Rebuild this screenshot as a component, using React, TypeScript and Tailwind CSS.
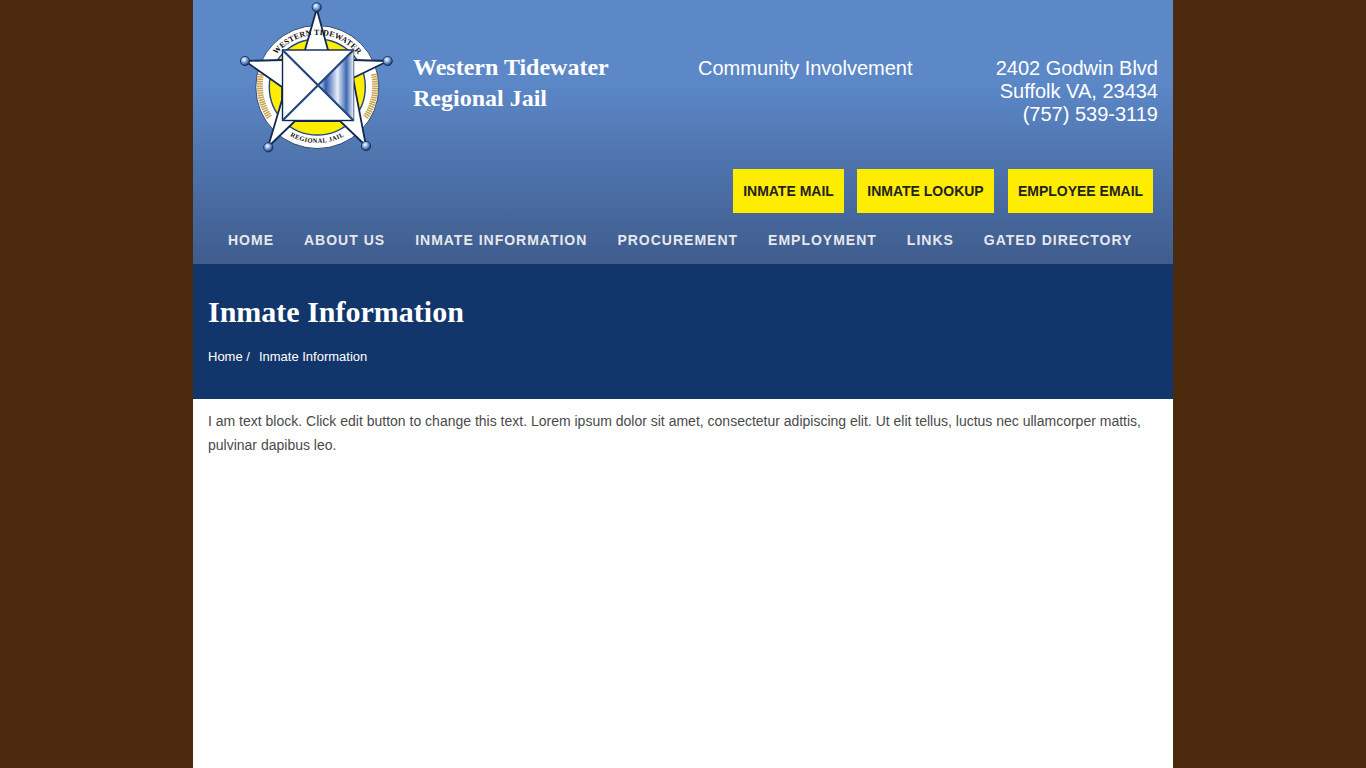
const navItems = ["HOME", "ABOUT US", "INMATE INFORMATION", "PROCUREMENT", "EMPLOYMENT", "LINKS", "GATED DIRECTORY"];

const Logo = () => (
  <svg viewBox="0 0 175 160" className="w-[175px] h-[160px] shrink-0">
    <defs>
      <linearGradient id="foil" gradientUnits="userSpaceOnUse" x1="88" x2="123.5" y1="0" y2="0">
        <stop offset="0" stopColor="#ffffff" />
        <stop offset="0.22" stopColor="#2f5cae" />
        <stop offset="0.55" stopColor="#e8eef8" />
        <stop offset="0.8" stopColor="#3f6ab4" />
        <stop offset="1" stopColor="#eef2f8" />
      </linearGradient>
      <radialGradient id="ball" cx="0.4" cy="0.35" r="0.7">
        <stop offset="0" stopColor="#ffffff" />
        <stop offset="0.45" stopColor="#7ba3dc" />
        <stop offset="1" stopColor="#0f2450" />
      </radialGradient>
      <path id="topArc" d="M 38.4 69.2 A 52 52 0 0 1 136.2 69.2" fill="none" />
      <path id="botArc" d="M 51.3 129.9 A 56 56 0 0 0 123.3 129.9" fill="none" />
    </defs>
    <circle cx="87.3" cy="87" r="61.5" fill="#ffffff" stroke="#1b2a4a" strokeWidth="0.8" />
    <circle cx="87.3" cy="87" r="48" fill="#ffed00" stroke="#24467f" strokeWidth="1.4" />
    <path d="M 31 74 A 57 57 0 0 0 40 118" fill="none" stroke="#c9a24f" strokeWidth="6" strokeDasharray="1.5 0.8" />
    <path d="M 144 74 A 57 57 0 0 1 135 118" fill="none" stroke="#c9a24f" strokeWidth="6" strokeDasharray="1.5 0.8" />
    <polygon
      points="86.7,9 98,50 123,60 158,61 123,78 136,146 110,121 65,121 38,147 52,100 52,87 15,61 52,60 75,50"
      fill="#ffffff"
      stroke="#122a55"
      strokeWidth="1.8"
      strokeLinejoin="round"
    />
    <text fontFamily="Liberation Serif, serif" fontWeight="700" fontSize="8" fill="#111111" letterSpacing="0.2">
      <textPath href="#topArc" startOffset="50%" textAnchor="middle">WESTERN TIDEWATER</textPath>
    </text>
    <text fontFamily="Liberation Serif, serif" fontWeight="700" fontSize="6.5" fill="#111111" letterSpacing="0.4">
      <textPath href="#botArc" startOffset="50%" textAnchor="middle">REGIONAL JAIL</textPath>
    </text>
    <rect x="52.5" y="50" width="71" height="70.5" fill="#ffffff" stroke="#0f2450" strokeWidth="1.4" />
    <polygon points="123.5,50 123.5,120.5 88,85.2" fill="url(#foil)" />
    <path d="M 52.5 50 L 123.5 120.5 M 123.5 50 L 52.5 120.5" stroke="#24467f" strokeWidth="2.2" />
    <circle cx="86.7" cy="7.3" r="4.6" fill="url(#ball)" stroke="#0f2450" strokeWidth="0.8" />
    <circle cx="15" cy="61" r="4.6" fill="url(#ball)" stroke="#0f2450" strokeWidth="0.8" />
    <circle cx="157.7" cy="61" r="4.6" fill="url(#ball)" stroke="#0f2450" strokeWidth="0.8" />
    <circle cx="38.3" cy="147.3" r="4.6" fill="url(#ball)" stroke="#0f2450" strokeWidth="0.8" />
    <circle cx="136" cy="146" r="4.6" fill="url(#ball)" stroke="#0f2450" strokeWidth="0.8" />
  </svg>
);

export default function App() {
  return (
    <div className="min-h-[768px] bg-[#4c2a0d] font-['Liberation_Sans',Arial,sans-serif]">
      <div className="mx-auto w-[980px] min-h-[768px] bg-white">
        {/* header */}
        <header className="h-[264px] bg-gradient-to-b from-[#5c88c8] via-[#5c88c8] via-30% to-[#3f5c8d]">
          <div className="flex h-[169px] pl-[37px] text-white">
            <Logo />
            <div className="ml-[8px] w-[285px] pt-[52px] font-['Liberation_Serif',serif] text-[24px] leading-[31px] font-bold">
              <div>Western Tidewater</div>
              <div>Regional Jail</div>
            </div>
            <div className="pt-[57px] text-[20px] leading-[23px]">Community Involvement</div>
            <div className="ml-auto pt-[57px] pr-[15px] text-right text-[20px] leading-[23px]">
              <div>2402 Godwin Blvd</div>
              <div>Suffolk VA, 23434</div>
              <div>(757) 539-3119</div>
            </div>
          </div>
          <div className="flex justify-end gap-[13px] pr-[20px] text-[14px] font-bold text-[#222222]">
            <a className="flex h-[44px] w-[111px] items-center justify-center bg-[#ffed00]">INMATE MAIL</a>
            <a className="flex h-[44px] w-[137px] items-center justify-center bg-[#ffed00]">INMATE LOOKUP</a>
            <a className="ml-px flex h-[44px] w-[145px] items-center justify-center bg-[#ffed00]">EMPLOYEE EMAIL</a>
          </div>
          <nav className="flex h-[51px] items-center gap-[30px] pt-[3px] pl-[35px] text-[14px] font-bold tracking-[1px] text-[#e6e8ec]">
            {navItems.map((item) => (
              <a key={item}>{item}</a>
            ))}
          </nav>
        </header>

        {/* page title */}
        <section className="h-[135px] bg-[#12366b] px-[15px] pt-[30px] text-white">
          <h1 className="font-['Liberation_Serif',serif] text-[30px] leading-[36px] font-bold">Inmate Information</h1>
          <div className="mt-[17px] flex text-[13px] leading-[20px]">
            <span>Home /</span>
            <span className="ml-[9px]">Inmate Information</span>
          </div>
        </section>

        {/* content */}
        <p className="px-[15px] py-[10px] text-[14px] leading-[24px] text-[#4a4a4a]">
          I am text block. Click edit button to change this text. Lorem ipsum dolor sit amet, consectetur adipiscing elit. Ut elit tellus, luctus nec ullamcorper mattis, pulvinar dapibus leo.
        </p>
      </div>
    </div>
  );
}
